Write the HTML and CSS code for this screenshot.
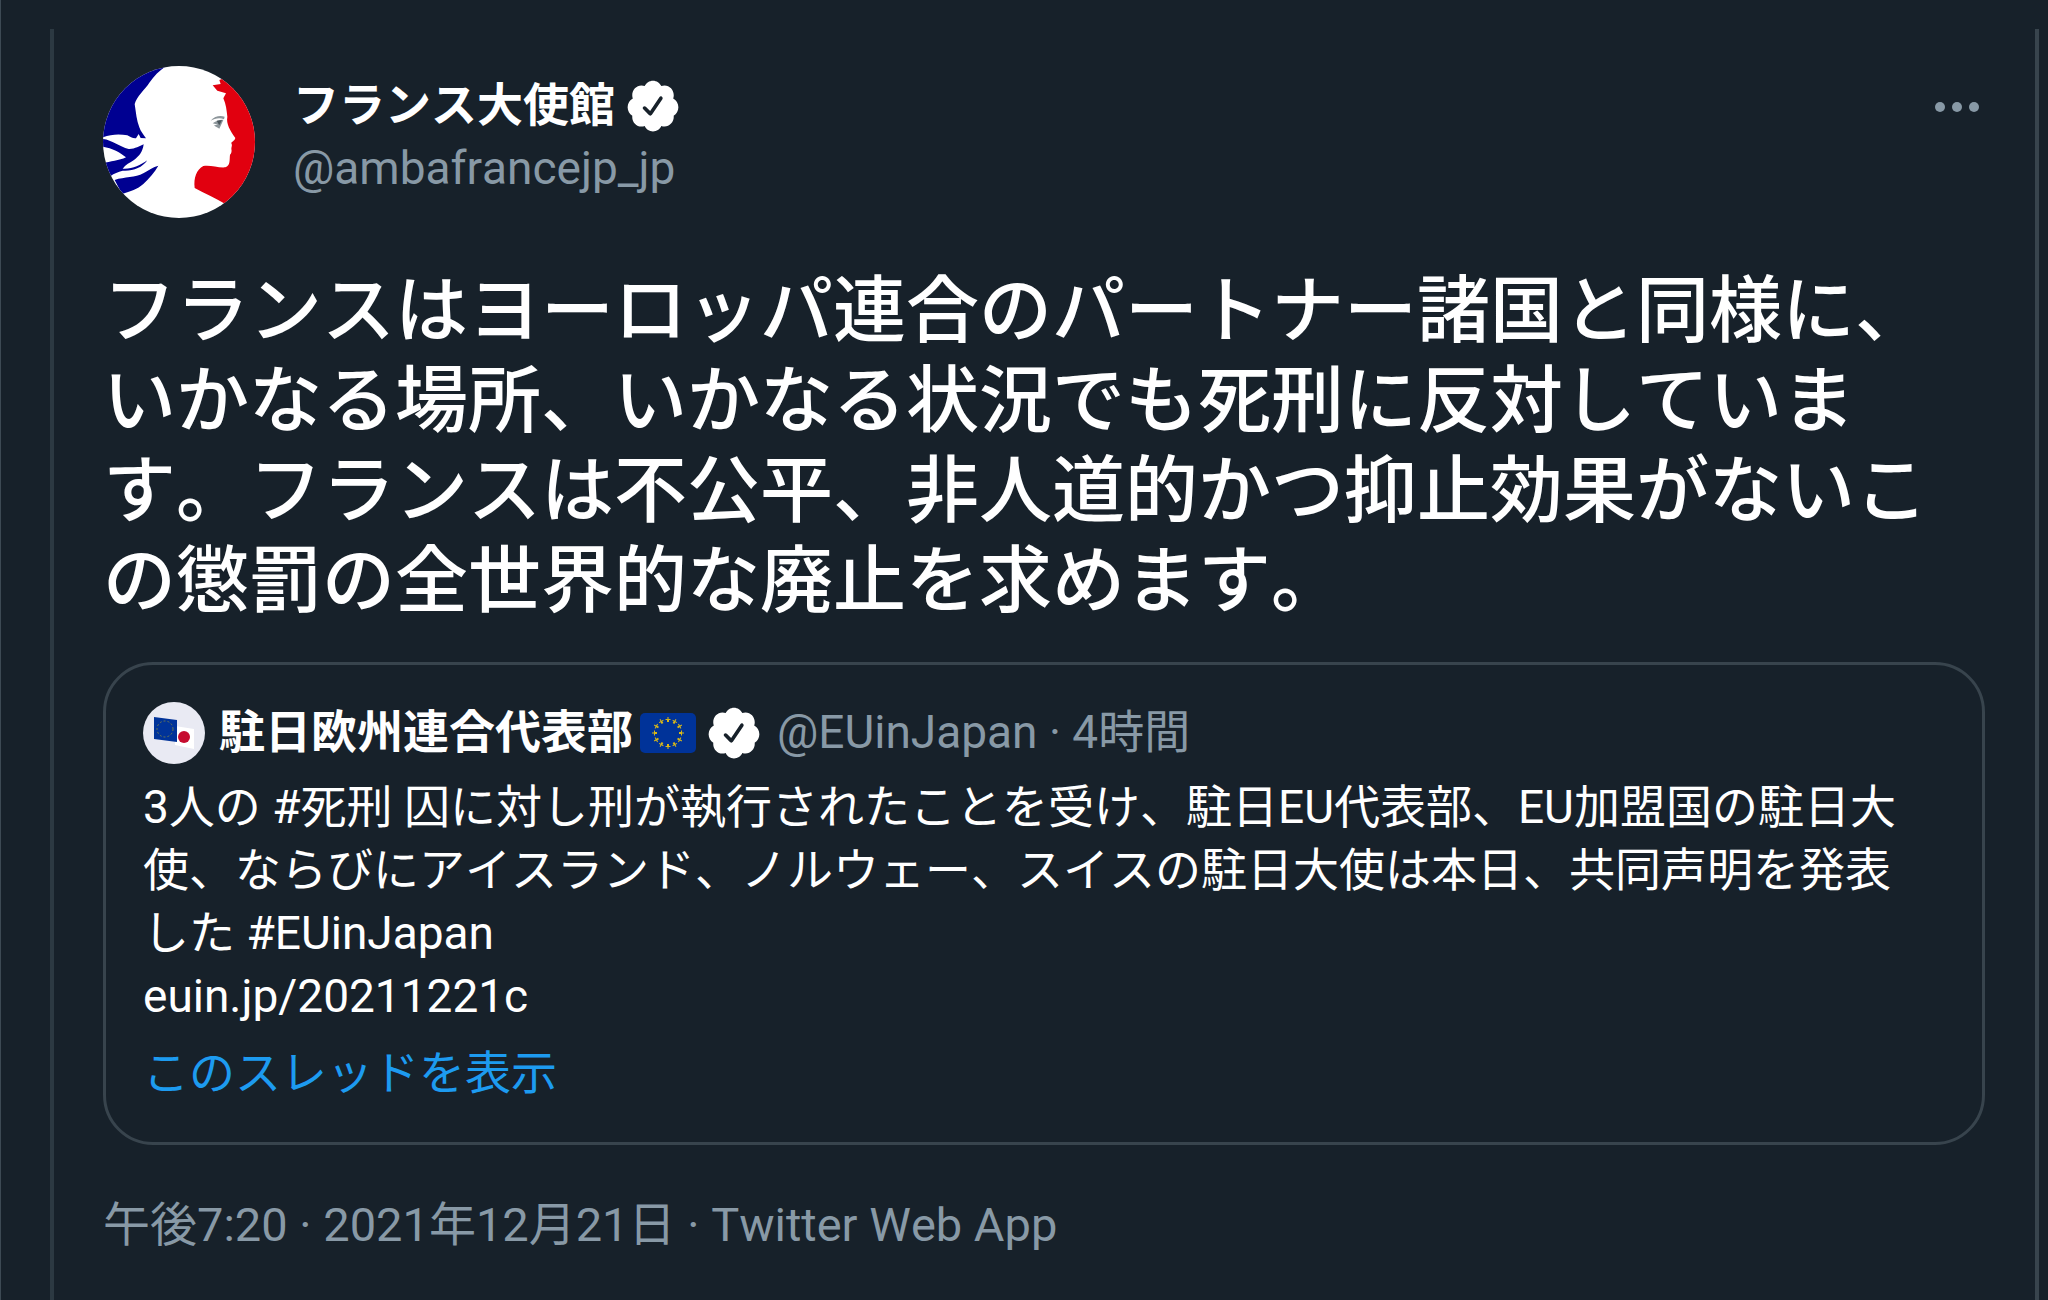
FILE: index.html
```html
<!DOCTYPE html>
<html lang="ja">
<head>
    <meta charset="UTF-8">
    <meta name="viewport" content="width=device-width, initial-scale=1.0">
    <title>フランス大使館</title>
    <link rel="stylesheet" href="styles.css">
</head>
<body>
    <svg class="defs" aria-hidden="true">
        <symbol id="verified" viewBox="0 0 24 24">
            <path d="M22.5 12.5c0-1.58-.875-2.95-2.148-3.6.154-.435.238-.905.238-1.4 0-2.21-1.71-3.998-3.818-3.998-.47 0-.92.084-1.336.25C14.818 2.415 13.51 1.5 12 1.5s-2.816.917-3.437 2.25c-.415-.165-.866-.25-1.336-.25-2.11 0-3.818 1.79-3.818 4 0 .494.083.964.237 1.4-1.272.65-2.147 2.018-2.147 3.6 0 1.495.782 2.798 1.942 3.486-.02.17-.032.34-.032.514 0 2.21 1.708 4 3.818 4 .47 0 .92-.086 1.335-.25.62 1.334 1.926 2.25 3.437 2.25 1.512 0 2.818-.916 3.437-2.25.415.163.865.248 1.336.248 2.11 0 3.818-1.79 3.818-4 0-.174-.012-.344-.033-.513 1.158-.687 1.943-1.99 1.943-3.484zm-6.616-3.334l-4.334 6.5c-.145.217-.382.334-.625.334-.143 0-.288-.04-.416-.126l-.115-.094-2.415-2.415c-.293-.293-.293-.768 0-1.06s.768-.294 1.06 0l1.77 1.767 3.825-5.74c.23-.345.696-.436 1.04-.207.346.23.44.696.21 1.04z"/>
        </symbol>
    </svg>
    <main class="column">
        <article class="tweet">
            <header class="author">
                <svg class="avatar" viewBox="39 48 456 456" role="img" aria-label="フランス大使館">
                    <rect x="39" y="48" width="456" height="456" fill="#fff"/>
                    <path fill="#000091" d="M39 48H228C208 62 192 78 178 98C164 120 140 138 134 162C138 188 140 212 148 232C152 244 160 254 168 265L152 264L146 252L138 265C128 266 120 260 112 256C90 252 64 252 39 262Z"/>
                    <path fill="#000091" d="M39 267C66 270 88 290 116 297C134 298 148 288 161 283C158 306 148 318 132 330C120 338 106 344 98 356C126 358 150 346 172 331C156 354 128 364 98 362C84 366 72 370 62 378L39 350V340C60 334 88 332 108 322C92 308 66 294 39 290Z"/>
                    <path fill="#000091" d="M74 390C104 380 136 384 160 370C174 362 190 350 205 347C194 368 176 386 160 402C142 418 122 424 96 432Z"/>
                    <path fill="#e1000f" d="M388 90L392 102L368 106L382 122L408 130L400 145C408 162 410 182 412 200C408 222 420 240 436 264C434 274 424 274 424 280C428 286 424 290 424 296C426 304 424 310 420 314C418 330 422 346 406 352C384 354 360 344 340 348C320 358 310 384 314 414C344 430 376 444 406 462L495 504V48Z"/>
                    <path fill="#8d969b" d="M362 212C374 198 390 196 404 200L402 208C388 202 374 206 362 212ZM368 220C380 212 392 208 400 210L388 236C382 232 376 230 372 226L384 224Z"/>
                    <path fill="#4b565c" d="M380 212L396 210L388 226Z"/>
                </svg>
                <div class="names">
                    <div class="name">フランス大使館<svg class="badge"><use href="#verified"/></svg></div>
                    <div class="handle">@ambafrancejp_jp</div>
                </div>
                <button class="more" aria-label="もっと見る">
                    <svg viewBox="0 0 44 10"><circle cx="5" cy="5" r="5"/><circle cx="22" cy="5" r="5"/><circle cx="39" cy="5" r="5"/></svg>
                </button>
            </header>

            <p class="text">フランスはヨーロッパ連合のパートナー諸国と同様に、いかなる場所、いかなる状況でも死刑に反対しています。フランスは不公平、非人道的かつ抑止効果がないこの懲罰の全世界的な廃止を求めます。</p>

            <section class="quote">
                <div class="quote-head">
                    <svg class="quote-avatar" viewBox="0 0 62 62" role="img" aria-label="駐日欧州連合代表部">
                        <rect width="62" height="62" fill="#e9eaf3"/>
                        <path fill="#fff" d="M32 24L51 27V47L32 43Z"/>
                        <path fill="#003399" d="M11 15L34 18V40L11 37Z"/>
                        <circle cx="22" cy="27" r="8" fill="none" stroke="#6c7a52" stroke-width="1" stroke-dasharray="2 2"/>
                        <circle cx="41" cy="35" r="6" fill="#c60c30"/>
                    </svg>
                    <span class="name">駐日欧州連合代表部</span>
                    <svg class="flag" viewBox="0 0 56 40" role="img" aria-label="EU">
                        <rect width="56" height="40" rx="5" fill="#003399"/>
                        <g fill="#d9b818">
                            <path id="star" d="M27.5 4h1v2h2v1h-1.500v2h-2v-2h-1.500v-1h2z"/>
                            <use href="#star" transform="rotate(30 28 20)"/>
                            <use href="#star" transform="rotate(60 28 20)"/>
                            <use href="#star" transform="rotate(90 28 20)"/>
                            <use href="#star" transform="rotate(120 28 20)"/>
                            <use href="#star" transform="rotate(150 28 20)"/>
                            <use href="#star" transform="rotate(180 28 20)"/>
                            <use href="#star" transform="rotate(210 28 20)"/>
                            <use href="#star" transform="rotate(240 28 20)"/>
                            <use href="#star" transform="rotate(270 28 20)"/>
                            <use href="#star" transform="rotate(300 28 20)"/>
                            <use href="#star" transform="rotate(330 28 20)"/>
                        </g>
                    </svg>
                    <svg class="badge"><use href="#verified"/></svg>
                    <span class="handle">@EUinJapan · 4時間</span>
                </div>
                <p class="quote-text">3人の #死刑 囚に対し刑が執行されたことを受け、駐日EU代表部、EU加盟国の駐日大使、ならびにアイスランド、ノルウェー、スイスの駐日大使は本日、共同声明を発表した #EUinJapan<br>euin.jp/20211221c</p>
                <a class="thread" href="#">このスレッドを表示</a>
            </section>

            <footer class="meta">午後7:20 · 2021年12月21日 · Twitter Web App</footer>
        </article>
    </main>
</body>
</html>
```
FILE: styles.css
```css
* {
    box-sizing: border-box;
}
body {
    margin: 0;
    padding-top: 29px;
    border-left: 1px solid #3d4a54;
    background-color: #17212a;
    color: #fff;
    font-family: Roboto, "Noto Sans CJK JP", sans-serif;
    font-size: 46px;
    font-kerning: none;
    text-spacing-trim: space-all;
    line-height: 63px;
}
.defs {
    display: block;
    width: 0;
    height: 0;
}
.column {
    min-height: calc(100vh - 29px);
    margin: 0 9px 0 49px;
    padding: 37px 50px 0 49px;
    border-left: 4px solid #2c3942;
    border-right: 4px solid #38444d;
}
.author {
    display: flex;
    align-items: flex-start;
}
.avatar {
    width: 152px;
    height: 152px;
    margin-right: 38px;
    border-radius: 50%;
}
.names {
    flex: 1;
    padding-top: 8px;
}
.name {
    display: flex;
    align-items: center;
    font-weight: bold;
}
.handle {
    color: #8899a6;
}
.badge {
    width: 58px;
    height: 58px;
    margin-left: 9px;
    fill: #fff;
}
.more {
    margin: 36px 6px 0 0;
    padding: 0;
    border: 0;
    background: none;
    cursor: pointer;
}
.more svg {
    display: block;
    width: 44px;
    height: 10px;
    fill: #8899a6;
}
.text {
    margin: 48px 0 36px;
    font-size: 73px;
    font-weight: 500;
    line-height: 90px;
}
.quote {
    padding: 36px 46px 37px 37px;
    border: 3px solid #38444d;
    border-radius: 50px;
}
.quote-head {
    display: flex;
    align-items: center;
}
.quote-avatar {
    width: 62px;
    height: 62px;
    margin-right: 14px;
    border-radius: 50%;
}
.flag {
    width: 56px;
    height: 40px;
    margin-left: 7px;
}
.quote-head .handle {
    margin-left: 14px;
}
.quote-text {
    margin: 12px 0 14px;
}
.thread {
    display: block;
    color: #1d9bf0;
    text-decoration: none;
}
.meta {
    margin-top: 48px;
    color: #8899a6;
    font-size: 47px;
}
```
